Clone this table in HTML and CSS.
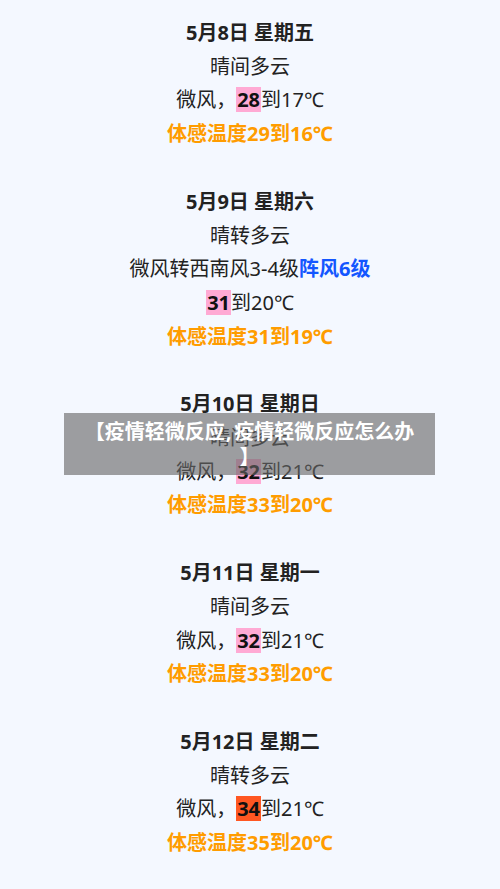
FILE: index.html
```html
<!DOCTYPE html>
<html lang="zh-CN">
<head>
<meta charset="utf-8">
<title>疫情轻微反应</title>
<link rel="stylesheet" href="styles.css">
</head>
<body>
<main class="page">
  <section class="day">
    <p class="title">5月8日 星期五</p>
    <p>晴间多云</p>
    <p>微风，<span class="hi pink">28</span>到17℃</p>
    <p class="feel">体感温度29到16℃</p>
  </section>
  <section class="day">
    <p class="title">5月9日 星期六</p>
    <p>晴转多云</p>
    <p>微风转西南风3-4级<span class="gust">阵风6级</span></p>
    <p><span class="hi pink">31</span>到20℃</p>
    <p class="feel">体感温度31到19℃</p>
  </section>
  <section class="day">
    <p class="title">5月10日 星期日</p>
    <p>晴间多云</p>
    <p>微风，<span class="hi pink">32</span>到21℃</p>
    <p class="feel">体感温度33到20℃</p>
  </section>
  <section class="day">
    <p class="title">5月11日 星期一</p>
    <p>晴间多云</p>
    <p>微风，<span class="hi pink">32</span>到21℃</p>
    <p class="feel">体感温度33到20℃</p>
  </section>
  <section class="day">
    <p class="title">5月12日 星期二</p>
    <p>晴转多云</p>
    <p>微风，<span class="hi red">34</span>到21℃</p>
    <p class="feel">体感温度35到20℃</p>
  </section>
</main>
<div class="banner"><span class="banner-line">【疫情轻微反应<span class="comma">,</span>疫情轻微反应怎么办</span><br>】</div>
</body>
</html>
```
FILE: styles.css
```css
html, body {
  margin: 0;
  padding: 0;
}
body {
  background: #f4f8ff;
  font-family: "Noto Sans", "Noto Sans CJK SC", sans-serif;
  color: #222;
  font-size: 20px;
  min-height: 889px;
  position: relative;
}
.page {
  padding-top: 16px;
  text-align: center;
}
.day {
  margin-bottom: 34px;
}
.day p {
  margin: 0;
  line-height: 33.7px;
}
.title {
  font-weight: 700;
}
.feel {
  color: #ff9c00;
  font-weight: 700;
}
.gust {
  color: #1356ff;
  font-weight: 700;
}
.hi {
  display: inline-block;
  line-height: 25px;
  padding: 0 1px;
  font-weight: 700;
  color: #111;
}
.pink {
  background: #ffaad4;
}
.red {
  background: #ff5722;
}
.banner {
  position: absolute;
  top: 413px;
  left: 64px;
  width: 355px;
  padding: 6px 8px;
  background: rgba(102, 102, 102, 0.62);
  color: #fff;
  font-family: "Noto Sans", "Noto Sans CJK SC", sans-serif;
  font-weight: 700;
  font-size: 20px;
  line-height: 25px;
  text-align: center;
}
.banner-line {
  white-space: nowrap;
}
.comma {
  margin: 0 3px 0 1px;
}
```
